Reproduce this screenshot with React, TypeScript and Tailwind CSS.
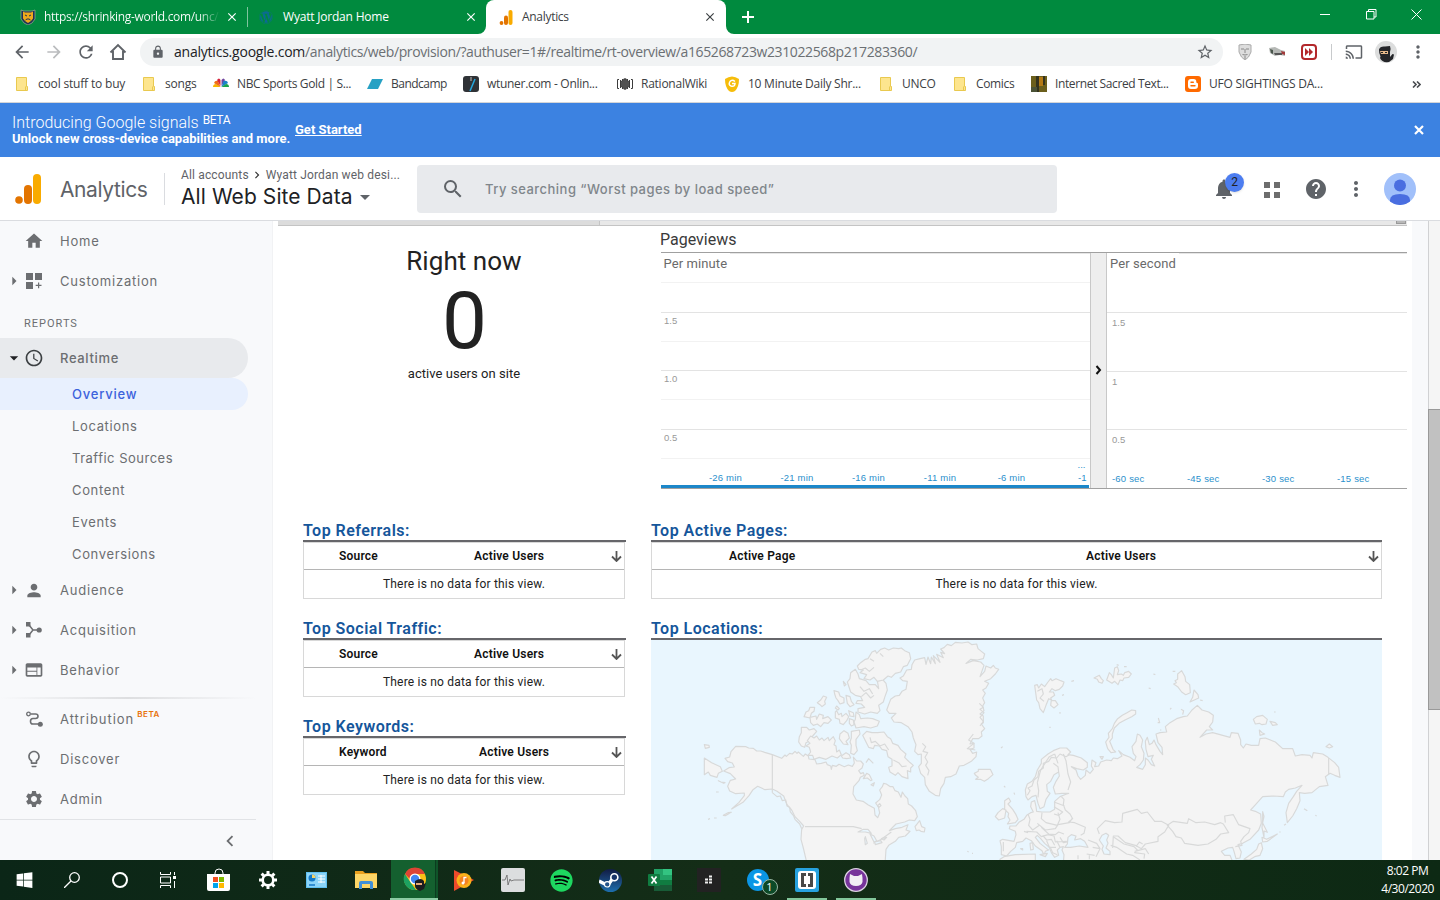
import React from "react";
import {
  MdArrowBack,
  MdArrowForward,
  MdArrowDropDown,
  MdArrowRight,
  MdCast,
  MdChevronLeft,
  MdChevronRight,
  MdClose,
  MdHelp,
  MdHome,
  MdLock,
  MdMoreVert,
  MdNotifications,
  MdPerson,
  MdRefresh,
  MdSchedule,
  MdSearch,
  MdSettings,
  MdStarBorder,
  MdWeb,
  MdLightbulbOutline,
} from "react-icons/md";
import { FaSpotify, FaWindows, FaWordpress } from "react-icons/fa";

const GA = ({ className }: { className: string }) => (
  <svg className={className} viewBox="0 0 26 30">
    <rect x="18" y="0" width="8" height="30" rx="4" fill="#f9ab00" />
    <rect x="9" y="11" width="8" height="19" rx="4" fill="#e37400" />
    <circle cx="4" cy="26" r="3.8" fill="#e37400" />
  </svg>
);

/* ---------- Browser chrome ---------- */

const TabStrip = () => (
  <div className="flex h-[34px] shrink-0 bg-[#008a3e] text-[12px] text-white">
    <div className="flex w-[248px] items-center pl-5">
      <svg className="h-4 w-4" viewBox="0 0 16 16">
        <path d="M1 1l3 1h8l3-1v9l-3 4-4 2-4-2-3-4z" fill="#1c3454" stroke="#b9b9a0" strokeWidth=".6" />
        <path d="M3 2.500l2 1h6l2-1v7l-2 2.500-3 2-3-2-2-2.500z" fill="#efa81c" />
        <path d="M5 6l2 1M11 6L9 7M5.500 11l1.500-1h2l1.500 1" stroke="#1c3454" strokeWidth="1" fill="none" />
      </svg>
      <span className="ml-2 w-[176px] bg-gradient-to-r from-white from-88% to-transparent bg-clip-text tracking-[-0.32px] whitespace-nowrap text-transparent">
        https://shrinking-world.com/unc/
      </span>
      <MdClose className="ml-[5px] h-[14px] w-[14px]" />
      <i className="ml-[8px] h-5 w-px bg-[#80c49e]" />
    </div>
    <div className="flex w-[238px] items-center pl-[11px]">
      <FaWordpress className="h-[14px] w-[14px] text-[#0b6b93]" />
      <span className="ml-[10px] w-[181px] tracking-[-0.2px]">Wyatt Jordan Home</span>
      <MdClose className="h-[14px] w-[14px]" />
    </div>
    <svg className="-ml-2 h-[34px] w-2" viewBox="0 0 8 34"><path d="M8 26v8H0a8 8 0 0 0 8-8z" fill="#fff" /></svg>
    <div className="flex w-[240px] items-center rounded-t-lg bg-white pl-[13px] text-[#3c4043]">
      <GA className="h-[15px] w-[14px]" />
      <span className="ml-[9px] w-[181px] tracking-[-0.3px]">Analytics</span>
      <MdClose className="h-[14px] w-[14px]" />
    </div>
    <svg className="h-[34px] w-2" viewBox="0 0 8 34"><path d="M0 26v8h8a8 8 0 0 1-8-8z" fill="#fff" /></svg>
    <svg className="ml-[8px] mt-[11px] h-3 w-3" viewBox="0 0 12 12"><path d="M6 0v12M0 6h12" stroke="#fff" strokeWidth="2" /></svg>
    <svg className="ml-auto mr-[18px] mt-[9px] h-[11px] w-[102px]" viewBox="0 0 102 11" fill="none" stroke="#fff">
      <path d="M0 5.500h10M46.500 2.500h7.500v7.500h-7.500zM48.500 2.500v-2h7.500v7.500h-2M91.500 .500l10 10M101.500 .500l-10 10" />
    </svg>
  </div>
);

const Toolbar = () => (
  <div className="flex h-9 shrink-0 items-center bg-white text-[#5f6368]">
    <MdArrowBack className="ml-3 h-5 w-5" />
    <MdArrowForward className="ml-3 h-5 w-5 text-[#babcbe]" />
    <MdRefresh className="ml-3 h-5 w-5" />
    <svg className="ml-[13px] h-[18px] w-[18px]" viewBox="0 0 18 18" fill="none" stroke="currentColor" strokeWidth="1.900">
      <path d="M1.500 9.500L9 2l7.500 7.500M4 8v8h10V8" />
    </svg>
    <div className="ml-[13px] flex h-7 w-[1083px] items-center rounded-full bg-[#f1f3f4] pl-[11px]">
      <MdLock className="h-[14px] w-[14px]" />
      <span className="ml-[9px] w-[1022px] whitespace-nowrap text-[14px] leading-[20px] tracking-[-0.38px] text-[#6b6f73]">
        <span className="tracking-[-0.22px] text-[#202124]">analytics.google.com</span>/analytics/web/provision/?authuser=1#/realtime/rt-overview/a165268723w231022568p217283360/
      </span>
      <MdStarBorder className="h-[18px] w-[18px] shrink-0" />
    </div>
    <svg className="ml-[14px] h-4 w-4" viewBox="0 0 16 16">
      <path d="M2 1q6-2 12 0v7q-2 6-6 8-4-2-6-8z" fill="#ddd" stroke="#aaa" />
      <path d="M4 5h3M9 5h3M8 5v4M5.500 10.500q2.500 1 5 0M8 12v3" stroke="#888" fill="none" />
    </svg>
    <svg className="ml-4 h-4 w-4" viewBox="0 0 16 16">
      <path d="M0 4l6-1 6 3 4 1v5l-5-1-5 1-5-3z" fill="#b5b8b5" />
      <path d="M1 5l3 1v4l-2-1z" fill="#4a564c" /><path d="M5 9h8v2H6z" fill="#555" /><path d="M12 7l4 1v3l-3-1z" fill="#a33b3b" />
    </svg>
    <svg className="ml-4 h-4 w-4" viewBox="0 0 16 16">
      <rect x="1" y="1" width="14" height="14" rx="3" fill="#fff" stroke="#b3282b" strokeWidth="2" />
      <path d="M4 4l4 4-4 4zM8 4l4 4-4 4z" fill="#b3282b" />
    </svg>
    <i className="ml-[14px] h-4 w-px bg-[#c8cacc]" />
    <MdCast className="ml-[13px] h-[18px] w-[18px]" />
    <svg className="ml-3 h-[22px] w-[22px]" viewBox="0 0 22 22">
      <circle cx="11" cy="11" r="11" fill="#dcdddd" />
      <path d="M4 8.500Q5 5 10 5.500l5-.5q1 2 0 6v5l2.500-3 1.500.500-1 4.500-4 3q-7 1-9-4 1-1 0-3-1-2-1-5z" fill="#242529" /><path d="M5 10h8v3H6z" fill="#e6b98c" /><path d="M6 11.500h2M10 11.500h2" stroke="#222" />
    </svg>
    <MdMoreVert className="ml-[11px] h-5 w-5" />
  </div>
);

const Folder = () => (
  <svg className="h-[14px] w-3" viewBox="0 0 12 14">
    <path d="M.5.5h10v9h1v4H.5z" fill="#fde58e" stroke="#e9c94f" />
    <path d="M9.500 9.500v4" stroke="#e9c94f" />
  </svg>
);

const Bookmarks = () => (
  <div className="flex h-8 shrink-0 items-center bg-white pb-[4px] text-[12px] whitespace-nowrap text-[#3c4043]">
    <div className="flex w-[127px] items-center gap-[10px] pl-4"><Folder /><span className="tracking-[-0.18px]">cool stuff to buy</span></div>
    <div className="flex w-[86px] items-center gap-[10px] pl-4"><Folder /><span className="tracking-[-0.2px]">songs</span></div>
    <div className="flex w-[154px] items-center gap-2">
      <svg className="h-4 w-4" viewBox="0 0 16 12">
        <path d="M7.500 9L0 9q0-3 3-3z" fill="#f7b500" /><path d="M7.500 9L1 5q1-3 4-2z" fill="#ef6c1a" /><path d="M7.500 8L4 2q2-3 3.500 0z" fill="#d6243c" />
        <path d="M8.500 8V2q2-3 3.500 0z" fill="#7047a0" /><path d="M8.500 9l2-6q4-1 4.500 2z" fill="#1b82c9" /><path d="M8.500 9L13 6q3 0 3 3z" fill="#19a34a" />
      </svg>
      <span className="tracking-[-0.35px]">NBC Sports Gold | S...</span>
    </div>
    <div className="flex w-[96px] items-center gap-2">
      <svg className="h-4 w-4" viewBox="0 0 16 16"><path d="M5 3h11l-5 10H0z" fill="#27a1c4" /></svg>
      <span className="tracking-[-0.52px]">Bandcamp</span>
    </div>
    <div className="flex w-[154px] items-center gap-2">
      <svg className="h-4 w-4" viewBox="0 0 16 16"><rect width="16" height="16" rx="3" fill="#2f3236" /><path d="M8 1v4" stroke="#777" strokeWidth="2" /><path d="M12 3L7 15" stroke="#25a9e0" strokeWidth="1.500" /></svg>
      <span className="tracking-[-0.3px]">wtuner.com - Onlin...</span>
    </div>
    <div className="flex w-[107px] items-center gap-2">
      <svg className="h-4 w-4" viewBox="0 0 16 16" stroke="#3c3c3c" fill="none"><path d="M2 3.500H.5v9H2M14 3.500h1.500v9H14M3.500 4v8M12.500 4v8M5.500 3v10M10.500 3v10" /><ellipse cx="8" cy="8" rx="4" ry="5" fill="#666" /><path d="M8 2v12M6 4v8M10 4v8" /></svg>
      <span className="tracking-[-0.25px]">RationalWiki</span>
    </div>
    <div className="flex w-[155px] items-center gap-2">
      <svg className="h-4 w-4" viewBox="0 0 16 16"><path d="M1 3q7-5 14 0 0 8-4 12-3 2-6 0-4-4-4-12z" fill="#f6bd0b" /><path d="M11 5.500Q8 3 6 5.500 4 9 7 10q4 1 4-2.500H8" stroke="#fff" strokeWidth="1.500" fill="none" /></svg>
      <span className="tracking-[-0.25px]">10 Minute Daily Shr...</span>
    </div>
    <div className="flex w-[74px] items-center gap-[10px] pl-[1px]"><Folder /><span className="tracking-[-0.3px]">UNCO</span></div>
    <div className="flex w-[78px] items-center gap-[10px] pl-[1px]"><Folder /><span className="tracking-[-0.35px]">Comics</span></div>
    <div className="flex w-[154px] items-center gap-2">
      <svg className="h-4 w-4" viewBox="0 0 16 16"><path d="M0 0h16v16H0z" fill="#6b5f1c" /><path d="M5 0h3v16H5zM12 0h2v9h-2z" fill="#34331e" /><path d="M8 1h4v9H8z" fill="#b47a16" /><path d="M0 11h6v5H0z" fill="#4a5236" /></svg>
      <span className="tracking-[-0.39px]">Internet Sacred Text...</span>
    </div>
    <div className="flex w-[220px] items-center gap-2">
      <svg className="h-4 w-4" viewBox="0 0 16 16">
        <rect width="16" height="16" rx="3" fill="#ff6a00" />
        <path d="M6 3h2.500A2.800 2.800 0 0 1 11.300 6q0 1 .9 1 .8 0 .8 1v2a3 3 0 0 1-3 3H6a3 3 0 0 1-3-3V6a3 3 0 0 1 3-3z" fill="#fff" />
        <path d="M6 6.200h2.300M6 9.800h4" stroke="#ff6a00" strokeWidth="1.400" strokeLinecap="round" />
      </svg>
      <span className="tracking-[-0.22px]">UFO SIGHTINGS DA...</span>
    </div>
    <svg className="ml-[7px] h-[7px] w-[9px]" viewBox="0 0 9 7" fill="none" stroke="#4a4d51" strokeWidth="1.600"><path d="M1 .5l3 3-3 3M5 .5l3 3-3 3" /></svg>
  </div>
);

/* ---------- Analytics header ---------- */

const Banner = () => (
  <div className="flex h-[54px] shrink-0 items-center bg-[#3c82e1] px-3 font-['Roboto',sans-serif] text-white">
    <div className="w-[283px] whitespace-nowrap">
      <div className="flex text-[16px] leading-[18px] font-light">
        Introducing Google signals<span className="-mt-[3px] ml-[4px] text-[12px] font-normal tracking-[-0.4px]">BETA</span>
      </div>
      <div className="text-[13px] leading-[14px] font-bold">Unlock new cross-device capabilities and more.</div>
    </div>
    <span className="text-[13px] font-bold underline">Get Started</span>
    <svg className="mr-[4px] ml-auto h-[10px] w-[10px]" viewBox="0 0 10 10"><path d="M1 1l8 8M9 1l-8 8" stroke="#fff" strokeWidth="2.200" /></svg>
  </div>
);

const Header = () => (
  <div className="flex h-16 shrink-0 items-center border-b border-[#dadce0] bg-white font-['Inter',sans-serif]">
    <GA className="ml-[15px] h-[30px] w-[26px]" />
    <span className="mt-[2px] ml-[19px] w-[104px] text-[21px] tracking-[-0.4px] text-[#5f6368]">Analytics</span>
    <i className="h-8 w-px bg-[#dadce0]" />
    <div className="mt-[1px] ml-4 w-[236px] whitespace-nowrap">
      <div className="flex items-center font-['Roboto',sans-serif] text-[12px] leading-[15px] tracking-[0.15px] text-[#5f6368]">
        All accounts<MdChevronRight className="mr-[2px] ml-[1px] h-[14px] w-[14px] text-[#333]" />Wyatt Jordan web desi...
      </div>
      <div className="flex items-center text-[21px] leading-[28px] tracking-[0.08px] text-[#202124]">
        All Web Site Data<MdArrowDropDown className="h-6 w-6 text-[#5f6368]" />
      </div>
    </div>
    <div className="flex h-12 w-[640px] items-center rounded bg-[#e8eaed] text-[#80868b]">
      <MdSearch className="ml-6 h-6 w-6 text-[#5f6368]" />
      <span className="mt-[2px] ml-5 text-[13px] font-medium tracking-[0.47px]">Try searching “Worst pages by load speed”</span>
    </div>
    <div className="relative ml-[155px] h-6 w-6">
      <MdNotifications className="h-6 w-6 text-[#5f6368]" />
      <span className="absolute -top-[4px] left-[13px] flex h-[19px] w-[19px] items-center justify-center rounded-full bg-[#4c7df0] font-['Roboto',sans-serif] text-[12px] text-[#202124] shadow">2</span>
    </div>
    <svg className="mt-[2px] ml-7 h-4 w-4" viewBox="0 0 16 16"><path d="M0 0h6v6H0zM10 0h6v6h-6zM0 10h6v6H0zM10 10h6v6h-6z" fill="#6d6d6d" /></svg>
    <MdHelp className="ml-6 h-6 w-6 text-[#5f6368]" />
    <MdMoreVert className="ml-4 h-6 w-6 text-[#5f6368]" />
    <svg className="ml-4 h-8 w-8" viewBox="0 0 32 32">
      <circle cx="16" cy="16" r="16" fill="#a1c0fa" /><circle cx="16" cy="12.500" r="6" fill="#4a6ee0" />
      <path d="M6 28.500V27q0-6 10-6t10 6v1.500a16 16 0 0 1-20 0z" fill="#4a6ee0" />
    </svg>
  </div>
);

/* ---------- Sidebar ---------- */

const CustomIcon = () => (
  <svg className="h-4 w-4" viewBox="0 0 16 16"><path d="M0 0h7v7H0zM9 0h7v7H9zM0 9h7v7H0zM12 9.500h1.200v2.300h2.300v1.200h-2.300v2.300H12V13H9.700v-1.200H12z" fill="currentColor" /></svg>
);
const AcqIcon = () => (
  <svg className="h-4 w-4" viewBox="0 0 16 16"><path d="M0 0h4.500v4.500H0zM0 11h4.500v4.500H0z" fill="currentColor" /><path d="M3 3l4 5-4 5M7 8h6" fill="none" stroke="currentColor" strokeWidth="1.500" /><circle cx="13.200" cy="8" r="2.600" fill="currentColor" /></svg>
);
const AttrIcon = () => (
  <svg className="h-4 w-[17px]" viewBox="0 0 17 16"><circle cx="2.500" cy="3" r="1.800" fill="none" stroke="currentColor" strokeWidth="1.300" /><path d="M4.500 3h5q2.500 0 2.500 2.200T9.500 7.500H7q-2.500 0-2.500 2.800T7 13h7" fill="none" stroke="currentColor" strokeWidth="1.600" /><circle cx="14.300" cy="13.200" r="2.500" fill="currentColor" /></svg>
);

type ItemProps = { icon: React.ReactNode; label: string; arrow?: boolean; beta?: boolean };
const Item = ({ icon, label, arrow, beta }: ItemProps) => (
  <div className="flex h-10 items-center">
    <span className="ml-1 flex w-5 justify-center">{arrow && <MdArrowRight className="h-5 w-5" />}</span>
    <span className="flex w-5 justify-center">{icon}</span>
    <span className={beta ? "mt-[2px] ml-4 tracking-[0.95px]" : "mt-[2px] ml-4"}>{label}</span>
    {beta && <span className="-mt-[10px] ml-[3px] text-[8px] font-semibold tracking-[0.6px] text-[#e8710a]">BETA</span>}
  </div>
);

const Sidebar = () => (
  <div className="w-[273px] shrink-0 border-r border-[#f1f2f4] bg-[#f8f9fb] font-['Inter',sans-serif] text-[13px] tracking-[0.78px] text-[#6c6e71]">
    <Item icon={<MdHome className="h-5 w-5" />} label="Home" />
    <Item icon={<CustomIcon />} label="Customization" arrow />
    <div className="flex h-[37px] items-center pt-[9px] pl-6 font-['Roboto',sans-serif] text-[11px] tracking-[1px]">REPORTS</div>
    <div className="flex h-10 w-[248px] items-center rounded-r-full bg-[#e8eaed]">
      <MdArrowDropDown className="ml-1 h-5 w-5 text-[#202124]" />
      <MdSchedule className="h-5 w-5 text-[#3c4043]" />
      <span className="mt-[2px] ml-4 font-medium tracking-[0.65px]">Realtime</span>
    </div>
    <div className="flex h-8 w-[248px] items-center rounded-r-full bg-[#e8f0fe] pt-[2px] pl-[72px] font-medium text-[#3c62dc]">Overview</div>
    {["Locations", "Traffic Sources", "Content", "Events", "Conversions"].map((t) => (
      <div key={t} className={t === "Traffic Sources" ? "flex h-8 items-center pt-[2px] pl-[72px] tracking-[0.5px]" : "flex h-8 items-center pt-[2px] pl-[72px] tracking-[0.65px]"}>{t}</div>
    ))}
    <Item icon={<MdPerson className="h-[21px] w-[21px]" />} label="Audience" arrow />
    <Item icon={<AcqIcon />} label="Acquisition" arrow />
    <Item icon={<MdWeb className="h-5 w-5" />} label="Behavior" arrow />
    <div className="mt-[7px] h-[2px] w-[256px] bg-gradient-to-r from-transparent via-[#dddee0] to-transparent" />
    <Item icon={<AttrIcon />} label="Attribution" beta />
    <Item icon={<MdLightbulbOutline className="h-5 w-5" />} label="Discover" />
    <Item icon={<MdSettings className="h-5 w-5" />} label="Admin" />
    <div className="flex w-[256px] justify-end border-t border-[#e1e3e6] pt-[10px] pr-[15px]"><MdChevronLeft className="h-[22px] w-[22px]" /></div>
  </div>
);

/* ---------- Report ---------- */

const Chart = () => (
  <svg className="h-[237px] w-[747px] font-['Liberation_Sans',sans-serif] text-[9.500px]" viewBox="0 0 747 237">
    <path d="M1 30.500h429M1 89.500h429M1 147.500h429M1 206.500h429" stroke="#f2f2f2" />
    <path d="M1 60.500h429M1 118.500h429M1 177.500h429M447 60.500h300M447 119.500h300M447 177.500h300" stroke="#e3e3e3" />
    <path d="M70 1.500h360M519 1.500h228" stroke="#e6e6e6" />
    <rect x="430" y="1" width="17" height="235" fill="#eee" />
    <path d="M430.500 1v235M446.500 1v235" stroke="#c8c8c8" />
    <path d="M1 .5h746M1 236.500h746" stroke="#a0a0a0" />
    <path d="M1 234.500h428" stroke="#1c87c9" strokeWidth="3" />
    <path d="M436.500 114l3.500 4-3.500 4" fill="none" stroke="#111" strokeWidth="2" />
    <g className="font-['Roboto',sans-serif] text-[13px]" fill="#6a6a6a"><text x="3.500" y="16" letterSpacing=".1">Per minute</text><text x="450" y="16" letterSpacing=".1">Per second</text></g>
    <g fill="#999"><text x="4" y="72">1.5</text><text x="4" y="130">1.0</text><text x="4" y="189">0.5</text><text x="452" y="74">1.5</text><text x="452" y="133">1</text><text x="452" y="191">0.5</text></g>
    <g fill="#2a8fcc">
      {["-26 min", "-21 min", "-16 min", "-11 min", "-6 min"].map((t, i) => <text key={t} x={65.500 + i * 71.500} y="229" textAnchor="middle" letterSpacing=".2">{t}</text>)}
      <text x="418" y="229">-1</text><text x="417.500" y="216">...</text>
      {["-60 sec", "-45 sec", "-30 sec", "-15 sec"].map((t, i) => <text key={t} x={452 + i * 75} y="230" letterSpacing=".2">{t}</text>)}
    </g>
  </svg>
);

type TableProps = { title: string; first: string; wide?: boolean; shift?: boolean };
const Table = ({ title, first, wide, shift }: TableProps) => (
  <div className="h-[98px]">
    <h3 className="h-[21px] pt-[1px] text-[16px] leading-[21px] font-semibold tracking-[0.48px] text-[#15569b]">{title}</h3>
    <div className="h-[2px] bg-[#66666a]" />
    <div className={wide ? "border border-[#d8d8d8] text-[12px] tracking-[0.2px]" : "mr-[1px] border border-[#d8d8d8] text-[12px] tracking-[0.2px]"}>
      <div className="flex h-[27px] items-center border-b border-[#b5b5b5] font-semibold text-[#111]">
        <span className={wide ? "ml-[77px] w-[357px]" : shift ? "ml-[35px] w-[140px]" : "ml-[35px] w-[135px]"}>{first}</span>
        <span>Active Users</span>
        <svg className="mr-[2px] ml-auto h-[11px] w-[11px]" viewBox="0 0 11 11"><path d="M5.500 0v10M1 5.500l4.500 4.500L10 5.500" fill="none" stroke="#555" strokeWidth="1.800" /></svg>
      </div>
      <div className="flex h-7 items-center justify-center text-[#222]">There is no data for this view.</div>
    </div>
  </div>
);

const WEST = [
  "M318 350l8 4 14 1 10 8 12 0 12 4 23 7 28 11 10-10 4 4 10-9 8 2 8-8 6 6 4-4 9 8 6 5 6-7 9 6 2 9 18 2 5 13 14-2 14-4 4 8 10 4 2 10 3-12 12 3 8-6 16 7 12-5 12 4 6-10-3-18 10 12 12 0 8 9-4 12-10 8 6 9 8-3 3 8-12 6-4 10-16 18-2 22 10 18 20 4 16 11 18 10 2 20 8 8 6-14-4-18-8-12 12-10 6-14-6-15 8-10 4-10 8 2 12 8 8 0 6 12 10 4 8 16 4-16 8 12 8 8 2 16 10 6 12 14 5 18-8 12-16-2-14 6-26 6-20 20 18-6 20-4 18-8-6 16 12 4-14 14-20 4-10 12-20 12-8 12-4 60H505l-15-64-7-26 2-30 6-10-12-14-14-14-10-20-14-16-10-26-20-14-14-7-22 2-22-10-14 10-12 18-18 20-34 20 22-20 16-20 0-8-26 2-18-8-6-14 8-18 16-4-16-16-20-8 16-10 16-2-6-12-14-4-8-10 14-4 4-16 14-16z",
  "M193 384l22 14 26 12 6 14-12 6-4 12-20-6-6-10-12 8z",
  "M193 344l14 2 1 6-12 3zM235 452l8 4 12 2-4 2zM228 486h8M204 568l6-2M222 564h8M250 556l14-8 10-1-18 10z",
  "M484 292l16 0 8 8 14-4 8 8-12 14-8 14-12 6-4 14-10-4-8-12 2-16 6-12z",
  "M512 318l10 6 8-6 8 12 8-6 6 8 12-10 4 10 12-12 6 12-4 12 6 4 2 18 8-6 6 14-12 10-16-6-18 10-20-6-16 6-4-12-14 0 8-10-4-14-10-4 12-8-8-8z",
  "M492 260l6-14 8-4 4-10 14 0-2 12-8 6-4 14zM510 262l18-4 2 10 8-16 12 4-2 10 16-6 10 10-10 10-12-2-10 12-10-8-12 4-8-8zM532 218l10-8 8-12 10 4-6 12 2 8-10 8-6-6zM610 154l8 10-5 4zM582 182l14 4 4 12 12 6 0 14-12 4-6-10-6-8-4-12zM618 196l12 4 4 14 8 10-12 6-8-10zM590 228l8 8-4 4-8-6zM586 246l4-4 6 12 8-4 2 10 12-10 8 10-6 12-10 12-10-4-2-12-12-4zM626 242l14 6 2 12-12-2zM628 266l12 4 2 14-8 4-6-8zM648 246l10 8 4 12 20-2 16 2 20 8-6 14-20 6-20-4-24 4-6-18 4-8z",
  "M630 146l2-18 14-10 8 14 4 14 20 6 10 12 18 0 10 12-4-24 12-8 14 16 4 20-8 22-4 14-14 10 4 16-8 8-20-4-18 6-20-6 0-10 20-4-10-10-16-2 4-8 16 0-6-12-16-4-14-10-6-18-4-12z",
  "M652 108l10-10 14-10 8-2 12-20 10-4 4 8 12-12 12-4 12 6 14-6 16 2 8-2 10 8 14 6 4 18-10 20-12 4-8 16-16 4-12 12-10-4-14 12-18 4-10-12-12 8-18-4 8-12-20-6 10-8-14-2z",
  "M600 312l12-10 12 8 4 14-10 10 6 10-14-2-12-16zM634 304l24-4 2 12-12 16 0 18 4 16-10 12-10-4 2-24-4-10 4-12zM604 378l14-10 10 6 4 10-12 2-12-2zM668 316l12-12 16 4 16 0 20-2 10 14 10 6 6 14 16 6 8 12 16 14-4 10 12 12 14 12-8 8 0 12-10-4 2 24-18-6-12-12-8 8-16-10-4-14 10-4 0-20-12-8-4-18-14-4-8-10-14-2-4 10-14-4-8-16z",
  "M680 430l8 4 8 16-4 2-10-8-12 2zM693 464l10-6-3 10zM825 590l14-18 6 18 10 4-2 12-10-2-6-4-8 2zM713 527l6-6 4 6-6 5z",
  "M752 208l14-10 12-2 8-12 12-6 4-24-14-2-8-8 10-6 10-18 14-2 2-14 8-14 16-4 14-3 4 20 6-22 8 20 2-20 12 20-6-24 20 20-10-24 20 10-8-16 12 4-12-14 10-4 10-10 12 4 12-10 20 2 18-3 12 8 14-2 4 14 10 8 10 8-4 14-18 4-20-2-14 12 22-8 22 4 10 10-12 34 14-16 4-16 14 6 8-8 6 8 10 4-10 14-14 14-18 8 12 6-8 14-10 6 8 10-8 14 6 14-6 10 4 14-12 10 10 6 0 20-6 4 10 14-10 10 2 12-10 8-18 0-8 16 12-2 0 14-12 4 8 12 12-4-2 14-14 14-22 12-14 2-10 24-16 8-16 2-4 18-10 16-4 22-12-2-18-12-12-20-2-22-12-12-6-20 8-10 0-28-10 2-10-10 4-20-8-20-4-18-12-16-20-12-22-2-8-12 14-14-20 0-8-10z",
  "M1003 430l12-6 0-6 16 0 20 0 8 16-14 12-12 8-12-6-14 0 8-6-8-6zM982 664l4 2M996 670h3M1083 354l5-4M1092 468l4 4M1122 488l2 6",
];
const LAKES = [
  "M654 606l16-8 14 0 10 12-18-4zM676 620l6 20-6 4-2-18zM690 612l12 6 8 14-8 4zM704 636l18-4 4 6-20 6zM724 626l16-4-8 8z",
];
const EAST = [
  "M78 500L76 480 82 462 96 454 106 440 112 420 124 400 124 388 144 372 160 362 180 354 200 354 212 366 204 374 220 376 244 384 262 398 262 412 250 420 230 416 214 410 228 420 234 438 242 448 256 436 258 420 270 430 280 418 274 408 276 390 288 398 284 410 296 408 302 396 320 390 334 392 340 384 352 386 366 378 356 362 370 374 390 382 404 392 408 380 400 370 396 350 408 334 412 312 420 316 428 330 424 350 432 370 430 390 420 404 410 412 428 418 436 404 436 384 444 390 454 404 464 408 454 388 460 376 444 380 438 358 436 334 442 322 448 344 456 340 462 330 468 344 480 364 488 374 486 352 474 338 468 312 480 308 500 306 496 290 510 278 530 266 550 260 562 258 576 240 592 226 606 240 626 246 640 256 638 276 628 290 638 300 620 300 600 322 618 312 638 308 660 314 690 322 694 308 714 310 722 330 722 344 730 354 738 342 754 346 776 346 780 326 796 324 826 336 848 356 878 356 886 378 906 374 930 376 936 384 940 368 968 372 984 382 1004 398 1016 412 1020 442 1004 436 990 430 976 440 984 466 958 470 936 488 914 490 898 488 900 512 890 536 878 558 862 578 858 548 866 520 880 500 890 484 906 466 886 474 866 478 856 486 850 500 820 498 788 500 770 520 752 540 766 544 782 552 784 580 776 600 750 628 728 640 714 644 724 666 720 684 708 686 702 664 698 652 684 654 664 664 674 676 690 676 700 700 190 700 192 674 186 660 190 650 180 652 172 660 176 676 164 682 154 668 148 652 134 640 122 626 112 616 106 622 120 640 140 656 146 660 136 664 132 676 126 662 106 648 94 632 78 624 68 634 50 638 46 652 32 664 20 678 4 674 4 650 0 632 8 628 42 634 48 614 46 604 28 596 30 588 48 588 58 576 72 568 80 556 92 548 100 546 92 530 94 516 104 512 108 530 110 544 126 546 150 546 164 538 164 514 180 500 200 492 206 490 186 490 166 492 160 472 168 454 178 438 176 426 162 434 152 454 140 464 142 484 150 490 138 508 132 530 120 536 114 520 108 496 96 500 84 510z",
  "M104 166l8-2 4 10 8-12 10 8 10-14 8-10 4 6 12-6 14 6 10 4-4 12-10 10-12 4-10-6-8 10 12 0 4 10-12 8 4 8 10 0 8 12-12 10-10-8 2-16-8-4-8 20-8 22-10-12-4-18-6-8z",
  "M282 144l16-8 6 10 6 6-4 8-10-4-4-8zM320 150l8-22 6 6 6 10 4-30 8-4 4 12-4 12 12-2 6 4 4-8 12-4 8 8-8 10-14 2-4 8-8-2-6 14-10-10-8 6zM350 104l6 2M372 110l8 0",
  "M317 336l10-14-2-12 12-14 6-16 10-14 14-10 14-8 14-8 12 2 0 10-12 8-20 10-18 10-14 14-6 18 0 12-8 10 10 24 8 8-14 2-10-12z",
  "M545 122l10 18 2 14 12 10 2 24-14 6-12-8-12-16-12-8 8-4-4-6 8-4 0-16zM582 180l12 14 2 10-26 12 8-14zM518 124h8M460 132l6 2M446 174l6 2M600 210l8 2M760 268l10-8 18-4 14 12-4 14-12 2-8-4-12 2zM810 274l16 4 6 6-14 2zM778 300l8 8 8 4-14 4zM822 246l5 0M978 350l10-8 10 8-10 4zM543 238l8 4-3 12M510 238l4-4M475 264l4 14-6 0M480 300h4M214 154l8-2M186 196l6-2M180 246v5M148 292h4",
  "M788 545l4 14-4 20 14 28-10-4 0 20-6-30 2-24zM786 622l14 6 32-16-30 22-14 2zM784 638l4 18-8 20-16 4-16 10-16-2 22-16 16-14 6-16zM852 586l6-4M838 606h4M912 536l10 6M946 556l4 2M300 380l10 0-4 8z",
  "M14 512l12-8 6 10-8 8 14 16 10 16 6 14-8 10-24 4 8-12-6-10 2-10-12-12zM-6 548l14-12 10 4-4 24-18 6-10-10z",
  "M0 688l12-8 34-6 60-2 0 30-106 0zM90 640l8-2 2 20-8 2zM120 674l22-4-6 10zM62 656l6 0 0 4z",
];
const SEAS = [
  "M204 622l10-8 14 4-4 12 18-4 12 8 10 18-26-4-26 4-18 0 8-10zM306 616l12-6 8 6-6 14 4 10-6 14 12 10 0 10-18-2-6-14 4-10-12-18z",
];
const BORDERS =
  "M112 458l4 24-2 20M112 458l10-38 26-40 16-8M160 400l14 10 2 16M164 372l10 28M190 372l8 20 6 40 8 24-8 24M184 500l8 8-2 16 6 16 14 12 8 14-12 10 18 2 32 14-4 18-10 6M162 516l32 12M162 530l26 16-12 10-14-4M174 548l6 20-8 18-34-8-14-12 2-18M84 552l6 16-4 18 12 14 20-14M112 580l24 20 30-4 8-12 34-6 8-12M124 592l22 20 20 2 10-8 16 6M80 604l30 2 14 14 20-6 18 4 4 18 34-2M128 616l12 14 14-2 10 18M140 632l8 20 20 0M150 650l8 18 14 6M10 636v28M84 608l-12-4M264 630l26 10 10 16-22-4M300 656l-12 24M298 612l-6-16 24-24 28 6 22-2 2-26 44-12 12 12 18-4 22 28 20 0 22 12-12 20-20 14 0 14-38 8-12 14-18-10-30-8-22-20-14 0-2 36M502 586l18-12 42 6 4-14 22 12 26-2 30 8 18-6 8 4 16 26-24 4-14 16-24 14-30 4-40-6-10-16-16-4-10-16zM676 578l-2-20 26-4 16 30 34 12-4 12-14 12-10 14 4 12-20 4M332 646l18 6 30 20 18 4 22 14M342 622l30 20 30 8 10 10-8 8 30 4-2 14M408 650l10-14 10 6M404 664l32-8 10 16M180 622l10 16 12-2M170 632l10 20M260 672l24 4M234 676v12M268 676v12M986 384v50";

const WorldMap = () => (
  <svg className="block h-[220px] w-[731px] bg-[#e9f6fe]" viewBox="0 0 731 220" strokeLinejoin="round" fill="#f4f4f4" stroke="#d8d9d9" strokeWidth="3.500">
    <g transform="translate(-11 -10) scale(.33333)">
      {WEST.map((d) => <path key={d} d={d} />)}
      <path d="M397 374v114M495 590h145l25 6M700 640l24-12 30-22" fill="none" />
      {LAKES.map((d) => <path key={d} d={d} fill="#e9f6fe" />)}
      <path d="M397 488l14 12 10-2 6 14 10-2 4 18 8 4 2 14 10 12 4 10 14 14 6 14M847 340l10 10-8 14 14 4-8 14 8 14-6 10 10 16-4 14M1018 220l12 12-10 6 12 10-12 14 10 12-10 14M660 170l12 14 16-8 10 16M664 200l14-12 14 16 10-8M690 322l4 16 12-4 14 14 14-6 12 18M760 390l16 8 10 12 14-2M700 400l-14-14-8 12M1000 312l-14 18 16 10-20 16 24 4M662 120l14-6 12 10 14-12M690 86l12 8M720 70l10 10" fill="none" />
    </g>
    <g transform="translate(349 -10) scale(.33333)">
      {EAST.map((d) => <path key={d} d={d} />)}
      {SEAS.map((d) => <path key={d} d={d} fill="#e9f6fe" />)}
      <path d={BORDERS} fill="none" />
      <path d="M82 496l8-14-6-8 12-6 6-18 12-10 2-16 14-10 0-14 16-6 8-12 16 2 10-12 18 8 10-6M112 184l14-8 4 16-10 12 12 10" fill="none" />
    </g>
  </svg>
);

const Report = () => (
  <div className="w-[1139px] shrink-0 bg-white font-['Roboto',sans-serif]">
    <div className="mr-[5px] ml-[5px] flex h-[5px] border-b border-[#c4c4c4] bg-[#e8e8e8]">
      <div className="w-[322px] border-r border-[#c4c4c4] bg-[#dcdcdc]" />
      <div className="mr-[1px] ml-auto h-[3px] w-[10px] border border-t-0 border-[#999] bg-[#b8b8b8]" />
    </div>
    <div className="flex h-[293px]">
      <div className="flex w-[382px] flex-col items-center pt-[17px] text-[#222]">
        <div className="text-[26px] leading-[36px] tracking-[0.05px]">Right now</div>
        <div className="mt-[10px] ml-[1px] text-[80px] leading-[64px]">0</div>
        <div className="mt-[12px] text-[13px] leading-[18px] tracking-[0.04px]">active users on site</div>
      </div>
      <div className="ml-[5px]">
        <div className="h-[26px] text-[16px] leading-[27px] text-[#3a3a3a]">Pageviews</div>
        <Chart />
      </div>
    </div>
    <div className="flex gap-[25px] pl-[30px]">
      <div className="w-[323px]">
        <Table title="Top Referrals:" first="Source" />
        <Table title="Top Social Traffic:" first="Source" />
        <Table title="Top Keywords:" first="Keyword" shift />
      </div>
      <div className="w-[731px]">
        <Table title="Top Active Pages:" first="Active Page" wide />
        <h3 className="h-[21px] pt-[1px] text-[16px] leading-[21px] font-semibold tracking-[0.48px] text-[#15569b]">Top Locations:</h3>
        <div className="h-[2px] bg-[#66666a]" />
        <WorldMap />
      </div>
    </div>
  </div>
);

/* ---------- Taskbar ---------- */

const Slot = ({ children, open }: { children: React.ReactNode; open?: boolean }) => (
  <div className={open ? "flex w-[49px] items-center justify-center bg-[linear-gradient(to_top,#83c79b_2px,transparent_2px)] bg-[length:40px_100%] bg-center bg-no-repeat" : "flex w-[49px] items-center justify-center"}>{children}</div>
);

const Taskbar = () => (
  <div className="flex h-10 shrink-0 bg-gradient-to-r from-[#0b2617] via-[#142d17] to-[#0d2914] text-white">
    <div className="flex w-12 items-center justify-center"><FaWindows className="h-[18px] w-[17px]" /></div>
    <div className="flex w-12 items-center justify-center">
      <svg className="h-4 w-4" viewBox="0 0 16 16" fill="none" stroke="#fff" strokeWidth="1.300"><circle cx="10.500" cy="5.500" r="4.800" /><path d="M7 9l-7 7" /></svg>
    </div>
    <div className="flex w-12 items-center justify-center"><i className="h-4 w-4 rounded-full border-2 border-white" /></div>
    <div className="flex w-[50px] items-center justify-center pr-[2px]">
      <svg className="h-4 w-4" viewBox="0 0 16 16" fill="none" stroke="#fff"><path d="M.5 0v2.500h10V0M.5 5v6h10V5zM.5 16v-2.500h10V16M14.500 0v3M14.500 9v7" /><path d="M13 4h3v3h-3z" fill="#fff" stroke="none" /></svg>
    </div>
    <Slot>
      <svg className="h-6 w-6" viewBox="0 0 24 24"><path d="M8 7V5a4 4 0 0 1 8 0v2" stroke="#fff" fill="none" /><path d="M0 6h23v15q0 2-2 2H2q-2 0-2-2z" fill="#fff" /><path d="M6 9h5v5H6z" fill="#f25022" /><path d="M12 9h5v5h-5z" fill="#7fba00" /><path d="M6 15h5v5H6z" fill="#00a4ef" /><path d="M12 15h5v5h-5z" fill="#ffb900" /></svg>
    </Slot>
    <Slot>
      <svg className="h-[18px] w-[18px]" viewBox="0 0 18 18" stroke="#fff" fill="none"><circle cx="9" cy="9" r="5.300" strokeWidth="2.600" /><path d="M9 0v3M9 15v3M0 9h3M15 9h3M2.600 2.600l2.200 2.200M13.200 13.200l2.200 2.200M2.600 15.400l2.200-2.200M13.200 4.800l2.200-2.200" strokeWidth="3" /></svg>
    </Slot>
    <Slot>
      <svg className="h-4 w-[21px]" viewBox="0 0 21 16"><path d="M0 0h21v16H0z" fill="#5fc0f0" /><path d="M1 1h19v14H1z" fill="#8bd4f8" /><circle cx="6" cy="6" r="3.500" fill="#1479c9" /><path d="M6 2.500V6h3.500A3.500 3.500 0 0 0 6 2.500z" fill="#f3d36b" /><path d="M12 4h7M12 7h7M12 10h7M15 3v8" stroke="#fff" /><path d="M3 13h6" stroke="#1479c9" strokeWidth="1.500" /></svg>
    </Slot>
    <Slot>
      <svg className="h-[18px] w-[22px]" viewBox="0 0 22 18"><path d="M0 0h8l2 2h12v15H0z" fill="#e9a01f" /><path d="M0 3h22v14H0z" fill="#fcd667" /><path d="M4 18v-6q0-2 2-2h10q2 0 2 2v6h-3v-5H7v5z" fill="#3f8fd8" /></svg>
    </Slot>
    <div className="flex w-[49px] bg-[linear-gradient(to_top,#8bcca3_2px,transparent_2px)] bg-[length:48px_100%] bg-no-repeat">
      <div className="mb-[2px] ml-[1px] flex w-[44px] items-center justify-center bg-[#14602f] pl-[4px]">
        <svg className="h-6 w-6" viewBox="0 0 24 24"><circle cx="12" cy="12" r="11" fill="#fbc116" /><path d="M2 7A11 11 0 0 1 22 7H12a5 5 0 0 0-5 5z" fill="#dd4435" /><path d="M2 7l6 9 5 7A11 11 0 0 1 2 7z" fill="#1da261" /><circle cx="12" cy="12" r="5.500" fill="#fff" /><circle cx="12" cy="12" r="4.200" fill="#4286f3" /><path d="M12 14q6-4 9 0v3l2-1-2 6-4 2q-5-2-5-5z" fill="#1c1c20" /><path d="M13 16h6v2h-6z" fill="#e6a877" /></svg>
      </div>
      <div className="mb-[2px] w-[3px] border-l border-[#0b3c1f] bg-[#0f5429]" />
    </div>
    <Slot>
      <svg className="h-[23px] w-5" viewBox="0 0 20 23"><path d="M0 1l20 10L0 22z" fill="#ee4a2b" /><circle cx="10" cy="11.500" r="7.500" fill="#fbb11a" /><circle cx="10" cy="11.500" r="4.500" fill="#f58220" /><path d="M10 14V8.500h2.500" stroke="#fff" strokeWidth="1.300" fill="none" /><circle cx="9" cy="14" r="1.500" fill="#fff" /></svg>
    </Slot>
    <Slot>
      <svg className="h-6 w-6" viewBox="0 0 24 24"><rect width="24" height="24" rx="2" fill="#dcdedf" /><path d="M1 12h3l2-5 1 10 2-6 1 2 3-1h10" stroke="#666" strokeWidth=".8" fill="none" /></svg>
    </Slot>
    <Slot><span className="flex h-[18px] w-[18px] items-center justify-center rounded-full bg-black"><FaSpotify className="h-[23px] w-[23px] shrink-0 text-[#1ed760]" /></span></Slot>
    <Slot>
      <span className="flex h-[23px] w-[23px] items-center justify-center rounded-full bg-gradient-to-b from-[#101c44] to-[#1d6fae]">
        <svg className="h-[23px] w-[23px]" viewBox="0 0 21 21"><path d="M0 11l8 4 5-7M13 8l-5 7" stroke="#fff" strokeWidth="3" fill="none" /><circle cx="14" cy="7.500" r="3.200" fill="#183468" stroke="#fff" strokeWidth="1.500" /><circle cx="7.500" cy="14" r="2.500" fill="#245388" stroke="#fff" /></svg>
      </span>
    </Slot>
    <Slot>
      <svg className="h-[22px] w-6" viewBox="0 0 24 22"><path d="M6 0h9v11H6z" fill="#21a366" /><path d="M15 0h9v6h-9z" fill="#33c481" /><path d="M15 6h9v5h-9z" fill="#21a366" /><path d="M6 11h18v11H6z" fill="#107c41" /><path d="M6 16h18v6H6z" fill="#185c37" /><rect y="5" width="12" height="12" rx="1" fill="#107c41" /><path d="M3.500 7.500l5 7M8.500 7.500l-5 7" stroke="#fff" strokeWidth="1.700" /></svg>
    </Slot>
    <Slot>
      <svg className="h-6 w-6" viewBox="0 0 24 24"><path d="M0 0h24v24H0z" fill="#222" /><path d="M12 7.500h3v2h-3zM12 10.500h3v2h-3zM8 10.500h3v2H8zM12 13.500h3v2h-3zM8 13.500h3v2H8z" fill="#eee" /></svg>
    </Slot>
    <Slot>
      <span className="relative flex h-[22px] w-[22px] items-center justify-center rounded-full bg-[#0b96e5] text-[17px] font-bold">S
        <span className="absolute top-[10px] left-[15px] flex h-4 w-4 items-center justify-center rounded-full border border-[#9bb8a5] bg-[#0d4a27] text-[11px] font-normal">1</span>
      </span>
    </Slot>
    <Slot open>
      <svg className="h-6 w-6" viewBox="0 0 24 24"><rect width="24" height="24" rx="2" fill="#27a2df" /><rect x="3" y="3" width="18" height="18" rx="3" fill="#fff" /><path d="M11 5H6v14h5v-3H9V8h2zM13 5h5v14h-5v-3h2V8h-2z" fill="#484848" /></svg>
    </Slot>
    <Slot open>
      <svg className="h-6 w-6" viewBox="0 0 24 24"><circle cx="12" cy="12" r="11.300" fill="#77349b" stroke="#dcd3e2" strokeWidth="1.300" /><path d="M6 6l4 2h4l4-2 .5 4v4q-1 4-6.500 4t-6.500-4v-4z" fill="#f1eef4" /></svg>
    </Slot>
    <div className="mr-[6px] ml-auto flex flex-col items-center pt-[2px] text-[12px] leading-[18px] tracking-[-0.45px]">
      <span>8:02 PM</span>
      <span>4/30/2020</span>
    </div>
  </div>
);

export default function App() {
  return (
    <div className="flex h-[900px] w-[1440px] flex-col overflow-hidden bg-white font-['Open_Sans',sans-serif]">
      <TabStrip />
      <Toolbar />
      <Bookmarks />
      <div className="h-px shrink-0 bg-[#d3d5d8]" />
      <Banner />
      <Header />
      <div className="flex h-[639px] shrink-0 overflow-hidden">
        <Sidebar />
        <Report />
        <div className="w-4 bg-[#f8f9fb]" />
        <div className="w-3 border-l border-[#d0d1d3] bg-[#f5f5f5] pt-[188px]">
          <div className="-ml-px h-[301px] border border-r-0 border-[#999] bg-[#c1c1c1]" />
        </div>
      </div>
      <Taskbar />
    </div>
  );
}
